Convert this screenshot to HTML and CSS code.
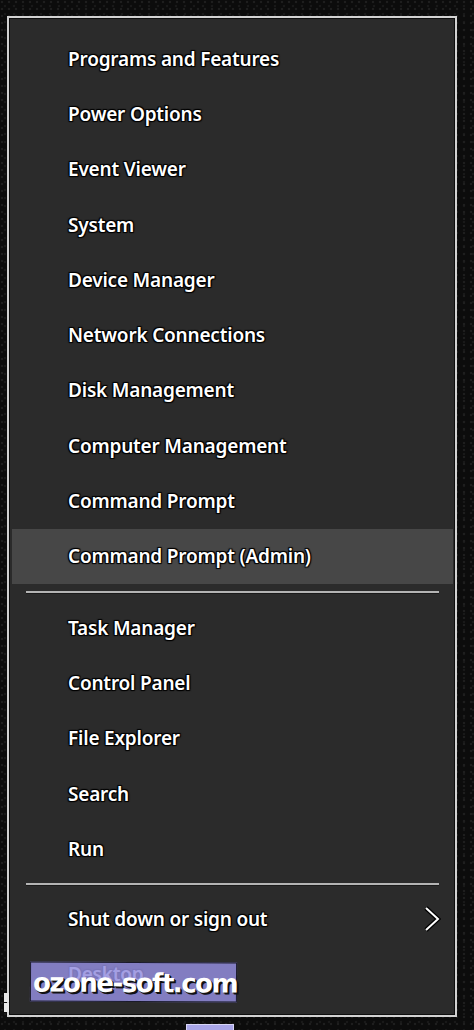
FILE: index.html
```html
<!DOCTYPE html>
<html lang="en">
<head>
<meta charset="utf-8">
<title>Quick Link Menu</title>
<link rel="stylesheet" href="styles.css">
</head>
<body>
<div class="stage">
  <div class="menu">
    <ul class="group">
      <li class="item">Programs and Features</li>
      <li class="item">Power Options</li>
      <li class="item">Event Viewer</li>
      <li class="item">System</li>
      <li class="item">Device Manager</li>
      <li class="item">Network Connections</li>
      <li class="item">Disk Management</li>
      <li class="item">Computer Management</li>
      <li class="item">Command Prompt</li>
      <li class="item active">Command Prompt (Admin)</li>
    </ul>
    <div class="sep sep-a"><span></span></div>
    <ul class="group">
      <li class="item">Task Manager</li>
      <li class="item">Control Panel</li>
      <li class="item">File Explorer</li>
      <li class="item">Search</li>
      <li class="item">Run</li>
    </ul>
    <div class="sep sep-b"><span></span></div>
    <ul class="group">
      <li class="item submenu">Shut down or sign out
        <svg class="chev" viewBox="0 0 18 26" width="18" height="26" aria-hidden="true">
          <polyline points="3,2 15,13 3,24" fill="none" stroke="#000" stroke-width="4.5" stroke-linejoin="miter"/>
          <polyline points="3,2 15,13 3,24" fill="none" stroke="#fff" stroke-width="2"/>
        </svg>
      </li>
      <li class="item desktop">Desktop</li>
    </ul>
    <div class="watermark">ozone-soft.com</div>
  </div>
  <div class="mark mark-a"></div>
  <div class="mark mark-b"></div>
  <div class="tab"></div>
</div>
</body>
</html>
```
FILE: styles.css
```css
* { box-sizing: border-box; }
html, body { margin: 0; padding: 0; }
body {
  width: 474px;
  height: 1030px;
  overflow: hidden;
  background-color: #0c0c0c;
  background-image:
    radial-gradient(circle at 2px 2px, #1e1e1e 1px, transparent 1.6px),
    radial-gradient(circle at 5px 6px, #191919 1px, transparent 1.6px);
  background-size: 7px 7px, 9px 8px;
  font-family: "Noto Sans", "Open Sans", "DejaVu Sans", sans-serif;
}
.stage {
  position: relative;
  width: 474px;
  height: 1030px;
  padding: 16px 0 0 7px;
}
.menu {
  position: relative;
  width: 450px;
  height: 1001px;
  background: #2b2b2b;
  border: 2px solid #d2d2d2;
  box-shadow: inset 0 0 0 1px #0e0e0e;
  padding: 13px 4px 0 4px;
}
.group {
  list-style: none;
  margin: 0;
  padding: 0;
}
.item {
  height: 55.3px;
  display: flex;
  align-items: center;
  padding-left: 55px;
  padding-right: 10px;
  color: #fff;
  font-size: 19px;
  font-weight: 600;
  letter-spacing: -0.2px;
  text-shadow: 0 0 1px #000, 1px 1px 1px #000, -1px -1px 1px #000, 1px -1px 1px #000, -1px 1px 1px #000;
}
.item.active {
  background: #474747;
  margin: 0 -2px 0 -1px;
  padding-left: 56px;
}
.sep {
  display: flex;
  align-items: center;
  padding: 0 12px 0 13px;
}
.sep-a { height: 16px; }
.sep-b { height: 15px; }
.sep span {
  display: block;
  flex: 1;
  height: 2px;
  background: #b4b4b4;
  box-shadow: 0 1px 0 #1a1a1a;
}
.submenu { justify-content: space-between; }
.chev { display: block; }
.watermark {
  position: absolute;
  left: 21px;
  top: 944px;
  width: 207px;
  height: 40px;
  background: rgba(146, 141, 222, 0.84);
  border: 1px solid #1a1a2a;
  transform: rotate(0.3deg);
  color: #fff;
  font-family: "DejaVu Sans", sans-serif;
  font-weight: 700;
  font-size: 26px;
  letter-spacing: -1.5px;
  line-height: 40px;
  padding-left: 2px;
  white-space: nowrap;
  text-shadow: 2px 2px 0 #111, 1px 1px 0 #111;
}
.mark {
  position: absolute;
  left: 4px;
  width: 5px;
  height: 9px;
  background: #e8e8e8;
}
.mark-a { top: 993px; }
.mark-b { top: 1003px; }
.tab {
  position: absolute;
  left: 186px;
  top: 1024px;
  width: 48px;
  height: 8px;
  background: #a9a6e8;
  border: 1px solid #d8d6f6;
}
```
